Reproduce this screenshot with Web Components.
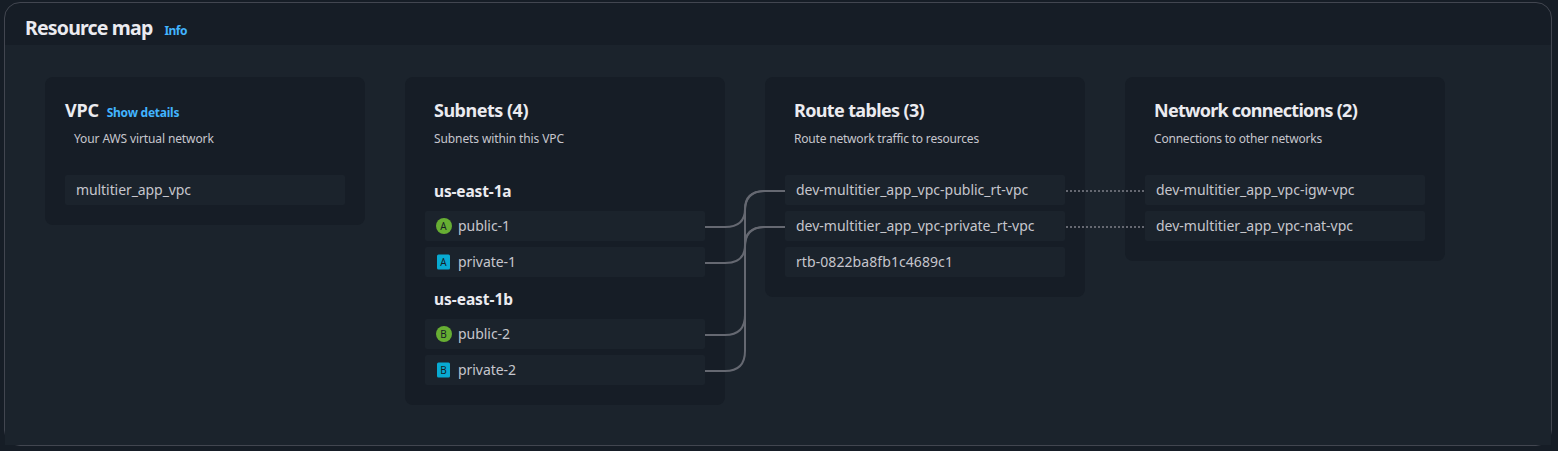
<!DOCTYPE html>
<html lang="en">
<head>
<meta charset="utf-8">
<title>Resource map</title>
<style>
body { margin: 0; background: #161d26; color: #c6c6cd; font-family: "Noto Sans", "Open Sans", sans-serif; }
</style>
</head>
<body>
<vpc-resource-map></vpc-resource-map>
<script>
const define = (name, html, ready) => {
  const template = document.createElement('template');
  template.innerHTML = html;
  customElements.define(name, class extends HTMLElement {
    constructor() {
      super();
      this.attachShadow({ mode: 'open' }).append(template.content.cloneNode(true));
    }
    connectedCallback() { if (ready) ready(this, this.shadowRoot); }
  });
};

// A single line of text whose tracking is set so that it fills the given measure.
define('fitted-text', `<style>
:host { display: inline-block; white-space: pre; font-stretch: 88%; }
span { display: inline-block; }
</style><span><slot></slot></span>`, (host, root) => {
  const span = root.querySelector('span');
  requestAnimationFrame(() => {
    const target = parseFloat(host.getAttribute('measure'));
    const count = host.textContent.length;
    if (target) {
      span.style.letterSpacing = (target - span.getBoundingClientRect().width) / count + 'px';
      host.style.width = target + 'px';
    }
  });
});

define('zone-badge', `<style>
:host { display: flex; width: 16px; height: 16px; margin-right: 6px; flex: none; }
svg { display: block; }
text { font: 10px "Noto Sans", sans-serif; fill: #161d26; text-anchor: middle; }
:host([kind="private"]) circle, :host(:not([kind="private"])) rect { display: none; }
</style><svg width="16" height="16" viewBox="0 0 16 16"><circle cx="8" cy="8" r="8" fill="#67ae33"/><rect x="1" y=".5" width="13" height="15" rx="1.5" fill="#08aad2"/><text x="7.4" y="11.7"></text></svg>`,
(host, root) => { root.querySelector('text').textContent = host.getAttribute('zone'); });

define('resource-item', `<style>
:host { display: flex; align-items: center; box-sizing: border-box; height: 30px; padding: 0 11px; border-radius: 2px; background: #1b232c; font-size: 14px; font-weight: 450; line-height: 30px; color: #c6c6cd; }
</style><slot></slot>`);

define('zone-label', `<style>
:host { display: block; height: 30px; padding-left: 9px; font-size: 15.5px; line-height: 32px; font-weight: 700; color: #ebebf0; }
</style><slot></slot>`);

define('text-link', `<style>
:host { color: #42b4ff; font-size: 12px; font-weight: 700; line-height: 20px; }
</style><slot></slot>`);

define('resource-card', `<style>
:host { display: flex; flex-direction: column; box-sizing: border-box; width: 320px; padding: 20px; border-radius: 8px; background: #161d26; }
header { display: flex; align-items: baseline; gap: 8px; height: 27px; padding-left: 9px; font-size: 18px; line-height: 27px; font-weight: 700; color: #ebebf0; }
:host([flush]) header { padding-left: 0; }
.about { height: 20px; margin: 4px 0 27px; padding-left: 9px; font-size: 12px; font-weight: 450; line-height: 21px; }
.items { display: flex; flex-direction: column; gap: 6px; }
</style><header><slot name="title"></slot></header><div class="about"><slot name="about"></slot></div><div class="items"><slot></slot></div>`);

define('route-lines', `<style>
:host { position: absolute; left: 660px; top: 98px; width: 480px; height: 220px; pointer-events: none; }
svg { display: block; }
path { fill: none; stroke: #656871; stroke-width: 2; }
.dotted { stroke-dasharray: 2 2; }
</style><svg width="480" height="220" viewBox="705 175 480 220">
<path d="M705 227h20q20 0 20-18t20-18h20"/>
<path d="M705 263h20q20 0 20-18t20-18h20"/>
<path d="M705 335h20q20 0 20-20V211q0-20 20-20h20"/>
<path d="M705 371h20q20 0 20-20V247q0-20 20-20h20"/>
<path class="dotted" d="M1066 191h78M1066 227h78"/></svg>`);

define('vpc-resource-map', `<style>
:host { display: block; padding: 2px 6px 5px 4px; }
.frame { box-sizing: border-box; height: 444px; border: 1px solid #424650; border-radius: 16px; }
header { display: flex; align-items: baseline; gap: 12px; box-sizing: border-box; height: 42px; padding: 10px 20px 0; font-size: 19.5px; line-height: 30px; font-weight: 700; color: #ebebf0; }
.map { box-sizing: border-box; height: 400px; padding: 32px 40px; background: #1b232c; }
.columns { position: relative; display: flex; gap: 40px; align-items: flex-start; }
</style>
<section class="frame">
<header><fitted-text measure="127.4">Resource map</fitted-text><text-link><fitted-text measure="22.5">Info</fitted-text></text-link></header>
<div class="map"><div class="columns">
<resource-card flush><fitted-text slot="title" measure="33.7">VPC</fitted-text><text-link slot="title"><fitted-text measure="72.5">Show details</fitted-text></text-link>
<fitted-text slot="about" measure="139.7">Your AWS virtual network</fitted-text>
<resource-item><fitted-text measure="115">multitier_app_vpc</fitted-text></resource-item></resource-card>
<resource-card><fitted-text slot="title" measure="94">Subnets (4)</fitted-text><fitted-text slot="about" measure="130">Subnets within this VPC</fitted-text>
<zone-label><fitted-text measure="77.5">us-east-1a</fitted-text></zone-label>
<resource-item><zone-badge zone="A"></zone-badge><fitted-text measure="52">public-1</fitted-text></resource-item>
<resource-item><zone-badge zone="A" kind="private"></zone-badge><fitted-text measure="58">private-1</fitted-text></resource-item>
<zone-label><fitted-text measure="79">us-east-1b</fitted-text></zone-label>
<resource-item><zone-badge zone="B"></zone-badge><fitted-text measure="52">public-2</fitted-text></resource-item>
<resource-item><zone-badge zone="B" kind="private"></zone-badge><fitted-text measure="58">private-2</fitted-text></resource-item></resource-card>
<resource-card><fitted-text slot="title" measure="130">Route tables (3)</fitted-text><fitted-text slot="about" measure="185">Route network traffic to resources</fitted-text>
<resource-item><fitted-text measure="232.3">dev-multitier_app_vpc-public_rt-vpc</fitted-text></resource-item>
<resource-item><fitted-text measure="238.5">dev-multitier_app_vpc-private_rt-vpc</fitted-text></resource-item>
<resource-item><fitted-text measure="157">rtb-0822ba8fb1c4689c1</fitted-text></resource-item></resource-card>
<resource-card><fitted-text slot="title" measure="203">Network connections (2)</fitted-text><fitted-text slot="about" measure="168">Connections to other networks</fitted-text>
<resource-item><fitted-text measure="198.5">dev-multitier_app_vpc-igw-vpc</fitted-text></resource-item>
<resource-item><fitted-text measure="197">dev-multitier_app_vpc-nat-vpc</fitted-text></resource-item></resource-card>
<route-lines></route-lines>
</div></div></section>`);
</script>
</body>
</html>
